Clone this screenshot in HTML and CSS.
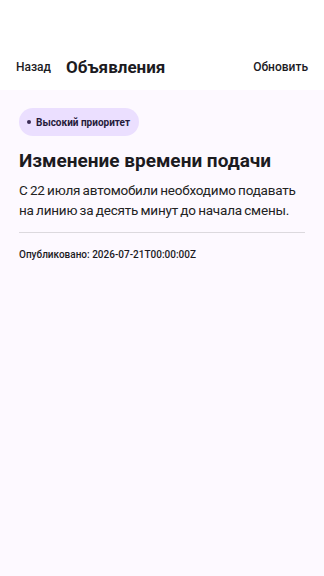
FILE: index.html
```html
<!DOCTYPE html>
<html lang="ru">
<head>
    <meta charset="UTF-8">
    <meta name="viewport" content="width=device-width, initial-scale=1.0">
    <title>Объявления</title>
    <link rel="stylesheet" href="styles.css">
</head>
<body>
    <!-- Верхняя панель -->
    <header class="topbar">
        <a class="topbar-btn" href="#back">Назад</a>
        <h1 class="topbar-title">Объявления</h1>
        <a class="topbar-btn topbar-right" href="#refresh">Обновить</a>
    </header>

    <!-- Объявление -->
    <main class="notice">
        <div class="chip"><span class="chip-dot"></span>Высокий приоритет</div>
        <h2 class="notice-title">Изменение времени подачи</h2>
        <p class="notice-text">С 22 июля автомобили необходимо подавать на линию за десять минут до начала смены.</p>
        <hr class="divider">
        <p class="notice-meta">Опубликовано: 2026-07-21T00:00:00Z</p>
    </main>
</body>
</html>
```

FILE: styles.css
```css
* {
    margin: 0;
    padding: 0;
    box-sizing: border-box;
    font-family: Roboto, 'Noto Sans', sans-serif;
}

body {
    background: #fdf9ff;
    color: #1c1b1f;
    min-height: 576px;
}

/* Верхняя панель */
.topbar {
    background: #ffffff;
    height: 90px;
    padding: 44px 16px 0;
    display: flex;
    align-items: center;
}

.topbar-btn {
    color: #1c1b1f;
    text-decoration: none;
    font-size: 12px;
    font-weight: 500;
}

.topbar-title {
    font-size: 17px;
    font-weight: 700;
    margin-left: 15px;
}

.topbar-right {
    margin-left: auto;
}

/* Объявление */
.notice {
    padding: 18px 19px 0;
}

.chip {
    display: inline-flex;
    align-items: center;
    gap: 5px;
    height: 28px;
    padding: 0 9px 0 8px;
    border-radius: 14px;
    background: #ebdfff;
    color: #261a3a;
    font-size: 10px;
    font-weight: 700;
}

.chip-dot {
    width: 4px;
    height: 4px;
    border-radius: 50%;
    background: #3a2c55;
}

.notice-title {
    font-size: 19px;
    font-weight: 700;
    margin-top: 12px;
    line-height: 26px;
}

.notice-text {
    font-size: 13.5px;
    letter-spacing: -0.2px;
    word-spacing: -0.8px;
    line-height: 20px;
    margin-top: 6px;
    color: #222;
}

.divider {
    border: none;
    border-top: 1px solid #dcd9de;
    margin: 12px 0 0;
}

.notice-meta {
    font-size: 10px;
    font-weight: 500;
    margin-top: 16px;
    color: #1c1b1f;
}
```
